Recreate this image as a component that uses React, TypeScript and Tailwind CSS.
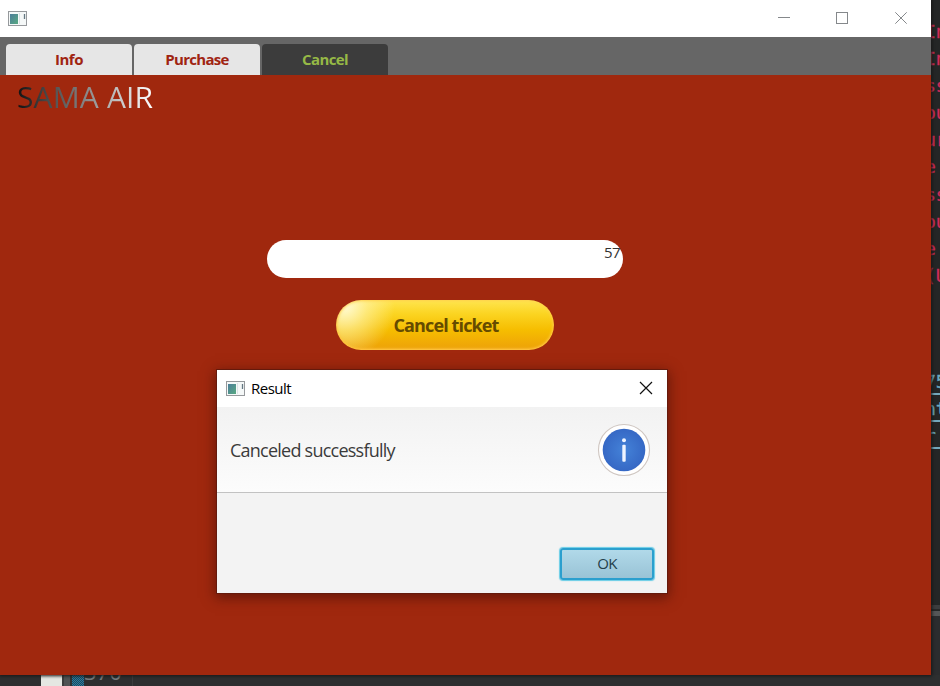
import React from "react";

const logLines = ["In", "In", "ss", "ou", "ur", "e ", "ss", "ou", "e ", "(U"];
const linkLines = ["75", "nt", "r "];

function AppIcon() {
  return (
    <svg width="19" height="15" viewBox="0 0 19 15" className="block shrink-0">
      <defs>
        <linearGradient id="pane" x1="0" y1="0" x2="1" y2="1">
          <stop offset="0" stopColor="#4b7d99" />
          <stop offset="1" stopColor="#58a982" />
        </linearGradient>
      </defs>
      <rect x="0.5" y="0.5" width="18" height="14" fill="#f5f8f8" stroke="#96999c" />
      <rect x="2" y="3" width="8" height="10" fill="url(#pane)" />
      <path d="M11.5 2v11" stroke="#dce4e6" />
      <path d="M16.5 3v5" stroke="#657782" strokeWidth="1.3" />
    </svg>
  );
}

function InfoIcon() {
  return (
    <svg width="54" height="54" viewBox="0 0 54 54" className="block">
      <defs>
        <radialGradient id="blue" cx=".5" cy=".5" r=".52">
          <stop offset="0" stopColor="#4482d8" />
          <stop offset="1" stopColor="#3567c4" />
        </radialGradient>
      </defs>
      <circle cx="27" cy="27" r="25.5" fill="#fff" stroke="#cfc6c1" strokeWidth="1.1" />
      <circle cx="27" cy="27" r="21.3" fill="url(#blue)" />
      <circle cx="27" cy="17.3" r="2" fill="#eef4ff" />
      <rect x="25.3" y="21.8" width="3.4" height="17" rx="1" fill="#eef4ff" />
    </svg>
  );
}

function Editor() {
  return (
    <>
      <div className="absolute left-[931px] top-0 h-[686px] w-[9px] overflow-hidden bg-[#242626] font-['DejaVu_Sans_Mono',monospace] text-[18px] leading-[27.1px]">
        <div className="mt-[18px] text-[#cf2c59] [-webkit-text-stroke:0.3px_#cf2c59]">
          {logLines.map((line, i) => (
            <div key={i} className="-ml-[6px] h-[27.1px] whitespace-pre">{line}</div>
          ))}
        </div>
        <div className="mt-[79px] text-[#6ba9c1] [-webkit-text-stroke:0.3px_#6ba9c1]">
          {linkLines.map((line, i) => (
            <div key={i} className="h-[27px] border-b-2 border-[#74a9bd] leading-[27px] whitespace-pre">
              <span className="-ml-[6px] block">{line}</span>
            </div>
          ))}
        </div>
        <div className="mt-[156px] h-[5px] border-b border-[#292929] bg-[#3c3d3e]" />
        <div className="mt-px h-[5px] bg-[#555657]" />
        <div className="h-[80px] bg-[#2b2c2e]" />
      </div>
      <div className="absolute left-0 top-[675px] flex h-[11px] w-[940px] overflow-hidden bg-[#2d2f30]">
        <div className="ml-[41px] w-[21px] bg-[#e5e7e2]" />
        <div className="w-[2px] bg-[#3b3d3d]" />
        <div className="w-[6px] bg-[#505354]" />
        <div className="w-[2px] bg-[#303233]" />
        <div className="w-[12px] bg-[#226784] bg-[repeating-conic-gradient(#297da1_0_25%,#20485b_0_50%)] bg-[length:2px_2px]" />
        <div className="-mt-[17px] h-[27px] w-[48px] font-['Open_Sans',sans-serif] text-[22px] leading-[27px] text-[#777b7d]">370</div>
        <div className="w-px bg-[#3a3c3d]" />
      </div>
    </>
  );
}

function MainWindow() {
  return (
    <main className="absolute left-0 top-0 flex h-[675px] w-[931px] flex-col bg-[#a0280e] shadow-[0_0_3px_1px_#171717]">
      <header className="flex h-[37px] shrink-0 items-center bg-white pb-px pl-2">
        <AppIcon />
        <svg width="136" height="16" viewBox="0 0 136 16" className="ml-auto mr-[20px] block" fill="none" stroke="#85888b">
          <path d="M3 7.5h12" />
          <rect x="61.5" y="2.5" width="11" height="11" />
          <path d="m120.3 2.3 11.4 11.4m0-11.4-11.4 11.4" />
        </svg>
      </header>
      <nav className="flex h-[38px] shrink-0 items-end gap-[2px] bg-[#666] pl-[6px] text-[15px] font-bold text-[#a02412]">
        <button className="h-[31px] w-[126px] rounded-t-[4px] bg-[#e6e6e6] tracking-[-0.5px]">Info</button>
        <button className="h-[31px] w-[126px] rounded-t-[4px] bg-[#e6e6e6] tracking-[-0.7px]">Purchase</button>
        <button className="h-[31px] w-[126px] rounded-t-[4px] bg-[#3c3c3c] tracking-[-0.6px] text-[#96b946]">Cancel</button>
      </nav>
      <h1 className="ml-[17px] mt-[1px] h-[41px] w-[136px] whitespace-nowrap bg-[linear-gradient(90deg,#111_0%,#444_20%,#686868_38%,#a5a5a5_62%,#d5d5d5_82%,#fff_100%)] bg-clip-text text-[30px] leading-[41px] tracking-[0.15px] text-transparent">SAMA AIR</h1>
      <section className="ml-[267px] mt-[123px] w-[356px]">
        <div className="flex h-[38px] justify-end rounded-full bg-white pr-[3px] pt-[2px] text-[15px] leading-5 tracking-[-0.6px] text-[#333]">57</div>
        <button className="ml-[69px] mt-[22px] block h-[50px] w-[218px] rounded-full bg-[radial-gradient(ellipse_50px_52px_at_4%_12%,#fffbd5_0%,#fff5ae99_45%,transparent_100%),linear-gradient(180deg,#ffe550_0%,#fbd421_28%,#f6bd00_60%,#eda009_100%)] pl-[2px] text-[18px] font-bold tracking-[-0.88px] text-[#654b00] shadow-[inset_0_0_3px_1px_#ffd24e,inset_0_-1px_2px_#ff9d15]">Cancel ticket</button>
      </section>
    </main>
  );
}

function ResultDialog() {
  return (
    <section className="absolute left-[217px] top-[370px] flex h-[223px] w-[450px] flex-col bg-[#f3f3f3] shadow-[0_0_0_1px_#651a0c,0_3px_12px_2px_#4a1007aa]">
      <header className="flex h-[37px] shrink-0 items-center bg-white pb-px pl-[9px]">
        <AppIcon />
        <span className="ml-[6px] pt-px text-[15px] tracking-[-0.5px] text-black">Result</span>
        <svg width="14" height="14" viewBox="0 0 14 14" className="ml-auto mr-[14px] block" stroke="#111" strokeWidth="1.2">
          <path d="m1 1 12 12M13 1 1 13" />
        </svg>
      </header>
      <div className="flex h-[86px] shrink-0 items-center justify-between border-b border-[#c2c2c2] bg-gradient-to-b from-[#f2f2f2] to-[#fcfcfc] pl-[13px] pr-4">
        <p className="pt-px text-[18px] tracking-[-0.76px] text-[#3b3b3b]">Canceled successfully</p>
        <InfoIcon />
      </div>
      <button className="ml-auto mr-[13px] mt-[55px] h-[32px] w-[94px] rounded-[3px] border-2 border-[#2b9fce] bg-gradient-to-b from-[#b1d9e9] to-[#99c3d6] pb-[2px] text-[15px] leading-[26px] tracking-[-0.6px] text-[#243f4a] shadow-[0_0_1px_1px_#67cce6]">OK</button>
    </section>
  );
}

export default function App() {
  return (
    <div className="relative h-[686px] w-[940px] overflow-hidden bg-[#242626] font-['Open_Sans','Noto_Sans',sans-serif]">
      <Editor />
      <MainWindow />
      <ResultDialog />
    </div>
  );
}
